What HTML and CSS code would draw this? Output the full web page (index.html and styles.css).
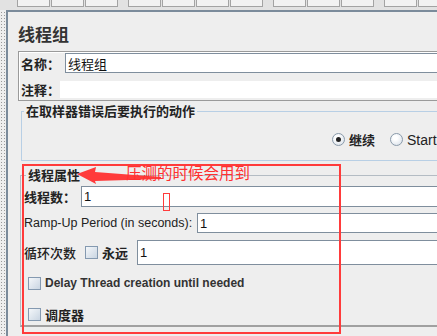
FILE: index.html
```html
<!DOCTYPE html>
<html lang="zh-CN">
<head>
    <meta charset="UTF-8">
    <title>线程组</title>
    <link rel="stylesheet" href="styles.css">
</head>
<body>
    <div class="toolbar">
        <div class="tb-group">
            <span class="tb-btn"></span><span class="tb-btn"></span><span class="tb-btn"></span>
        </div>
        <div class="tb-group">
            <span class="tb-btn"></span><span class="tb-btn"></span><span class="tb-btn"></span><span class="tb-btn"></span>
        </div>
        <div class="tb-group">
            <span class="tb-btn"></span><span class="tb-btn"></span><span class="tb-btn"></span>
        </div>
        <div class="tb-group">
            <span class="tb-btn"></span><span class="tb-btn"></span>
        </div>
    </div>
    <div class="main">
        <div class="dots"></div>
        <div class="panel">
            <h1 class="title">线程组</h1>

            <div class="name-box">
                <div class="row">
                    <label class="lbl lbl-name">名称：</label>
                    <div class="field field-name">线程组</div>
                </div>
                <div class="row row-comment">
                    <label class="lbl lbl-comment">注释：</label>
                    <div class="field field-comment"></div>
                </div>
            </div>

            <fieldset class="group group-action">
                <legend>在取样器错误后要执行的动作</legend>
                <div class="radio-row">
                    <span class="radio checked"></span><span class="radio-text">继续</span>
                    <span class="radio"></span><span class="radio-text en">Start</span>
                </div>
            </fieldset>

            <div class="thread-wrap">
                <fieldset class="group group-thread">
                    <legend>线程属性</legend>
                    <div class="trow trow-1">
                        <span class="lbl">线程数：</span>
                        <div class="field f-threads">1</div>
                    </div>
                    <div class="trow trow-2">
                        <span class="lbl en">Ramp-Up Period (in seconds):</span>
                        <div class="field f-ramp">1</div>
                    </div>
                    <div class="trow trow-3">
                        <span class="lbl loop">循环次数</span>
                        <span class="check"></span>
                        <span class="lbl forever">永远</span>
                        <div class="field f-loops">1</div>
                    </div>
                    <div class="trow trow-4">
                        <span class="check"></span>
                        <span class="check-text en">Delay Thread creation until needed</span>
                    </div>
                    <div class="trow trow-5">
                        <span class="check"></span>
                        <span class="check-text">调度器</span>
                    </div>
                </fieldset>

                <!-- red annotation drawn over the screenshot -->
                <div class="mark-box"></div>
                <svg class="mark-arrow" width="90" height="20" viewBox="0 0 90 20">
                    <polygon points="0,7 19,0 18,5 84,10 84,12 18,14 19,17" fill="#ff3b3b"/>
                </svg>
                <span class="mark-text">压测的时候会用到</span>
                <div class="mark-small"></div>
            </div>
        </div>
    </div>
</body>
</html>
```

FILE: styles.css
```css
body {
    margin: 0;
    width: 437px;
    height: 336px;
    overflow: hidden;
    background-color: #eeeeee;
    font-family: "Liberation Sans", Arial, "Noto Sans CJK SC", sans-serif;
    font-size: 13px;
    color: #222;
}
.toolbar {
    height: 10px;
    display: flex;
    padding-left: 17px;
    gap: 10px;
    background-color: #e2e2e2;
}
.tb-group {
    display: flex;
    gap: 1px;
}
.tb-btn {
    display: block;
    width: 31px;
    height: 6px;
    border: 1px solid #a3a3a3;
    border-top: none;
    background-color: #f2f2f2;
}
.main {
    display: flex;
    height: 326px;
}
.dots {
    width: 6px;
    background-color: #eeeeee;
    background-image: radial-gradient(#9a9a9a 0.6px, transparent 0.8px);
    background-size: 3px 3px;
    background-position: 0 1px;
}
.panel {
    flex: 1;
    border-left: 2px solid #7b8b9b;
    border-top: 2px solid #7b8b9b;
    padding-left: 10px;
    overflow: hidden;
}
.title {
    margin: 12px 0 0;
    font-family: "Noto Sans CJK SC", sans-serif;
    font-size: 17px;
    line-height: 20px;
    font-weight: 700;
    color: #333;
}
.name-box {
    margin-top: 7px;
    width: 480px;
    border: 1px solid #9a9a9a;
    box-shadow: inset 1px 1px 0 #fff;
    padding: 1px 0 1px 1px;
}
.row {
    display: flex;
    align-items: center;
}
.row-comment {
    margin-top: 7px;
}
.lbl {
    flex: none;
    font-family: "Noto Sans CJK SC", sans-serif;
    font-weight: 700;
    font-size: 13px;
    color: #222;
    white-space: nowrap;
}
.lbl.en {
    font-family: "Liberation Sans", Arial, sans-serif;
    font-weight: 400;
    font-size: 12.5px;
}
.lbl-name {
    width: 44px;
    padding-left: 1px;
}
.lbl-comment {
    width: 39px;
    padding-left: 1px;
}
.field {
    flex: 1;
    background-color: #fff;
    border: 1px solid #7f8e9d;
    box-sizing: border-box;
    padding-left: 2px;
    font-size: 13px;
    display: flex;
    align-items: center;
    color: #111;
}
.field-name {
    height: 20px;
    font-family: "Noto Sans CJK SC", sans-serif;
}
.field-comment {
    height: 17px;
    border: none;
}
.group {
    margin: 0;
    padding: 0;
    width: 480px;
    border: 1px solid #b8cfe5;
}
.group legend {
    margin-left: 2px;
    padding: 0 2px;
    font-family: "Noto Sans CJK SC", sans-serif;
    font-weight: 700;
    font-size: 13px;
    line-height: 16px;
    color: #222;
}
.group-action {
    margin: 2px 0 0 3px;
}
.radio-row {
    display: flex;
    align-items: center;
    padding: 14px 0 14px 310px;
    height: 13px;
}
.radio {
    width: 11px;
    height: 11px;
    border-radius: 50%;
    border: 1px solid #8a9aaa;
    background: radial-gradient(circle at 40% 35%, #ffffff 20%, #d3dce6 100%);
    position: relative;
}
.radio.checked::after {
    content: "";
    position: absolute;
    left: 3px;
    top: 3px;
    width: 5px;
    height: 5px;
    border-radius: 50%;
    background-color: #222;
}
.radio-text {
    margin: 0 15px 0 4px;
    font-family: "Noto Sans CJK SC", sans-serif;
    font-weight: 700;
}
.radio-text.en {
    font-family: "Liberation Sans", Arial, sans-serif;
    font-weight: 400;
    font-size: 14px;
}
.thread-wrap {
    position: relative;
    margin-top: 6px;
}
.group-thread {
    margin-left: 2px;
    padding: 0 0 4px 3px;
    border-color: #b4bcc4;
    border-bottom: 2px solid #a0a0a0;
}
.trow {
    display: flex;
    align-items: center;
}
.trow-1 {
    margin-top: 3px;
    height: 21px;
}
.trow-1 .lbl {
    width: 57px;
}
.trow-2 {
    margin-top: 6px;
    height: 20px;
}
.trow-2 .lbl {
    width: 173px;
}
.trow-3 {
    margin-top: 7px;
    height: 25px;
}
.trow-3 .field,
.trow-2 .field,
.trow-1 .field {
    height: 100%;
}
.loop {
    font-weight: 500;
    width: 61px;
}
.forever {
    margin-left: 4px;
    width: 35px;
}
.check {
    width: 11px;
    height: 11px;
    border: 1px solid #8499b0;
    background: linear-gradient(135deg, #f4f7fa 0%, #c9d5e2 100%);
    flex: none;
}
.trow-4 {
    margin-top: 12px;
    padding-left: 4px;
    height: 13px;
}
.trow-5 {
    margin-top: 18px;
    padding-left: 4px;
    height: 13px;
}
.check-text {
    margin-left: 4px;
    font-family: "Noto Sans CJK SC", sans-serif;
    font-weight: 700;
    font-size: 13px;
    line-height: 13px;
}
.check-text.en {
    font-family: "Liberation Sans", Arial, sans-serif;
    font-size: 12px;
    font-weight: 700;
    color: #333;
}
.mark-box {
    position: absolute;
    left: 4px;
    top: -3px;
    width: 315px;
    height: 166px;
    border: 2px solid #ff3b3b;
}
.mark-arrow {
    position: absolute;
    left: 59px;
    top: 0px;
}
.mark-text {
    position: absolute;
    left: 108px;
    top: -5px;
    font-family: "Noto Sans CJK SC", sans-serif;
    font-size: 15.5px;
    line-height: 20px;
    font-weight: 400;
    color: #ff3030;
}
.mark-small {
    position: absolute;
    left: 145px;
    top: 26px;
    width: 5px;
    height: 16px;
    border: 1px solid #ff3b3b;
}
```
